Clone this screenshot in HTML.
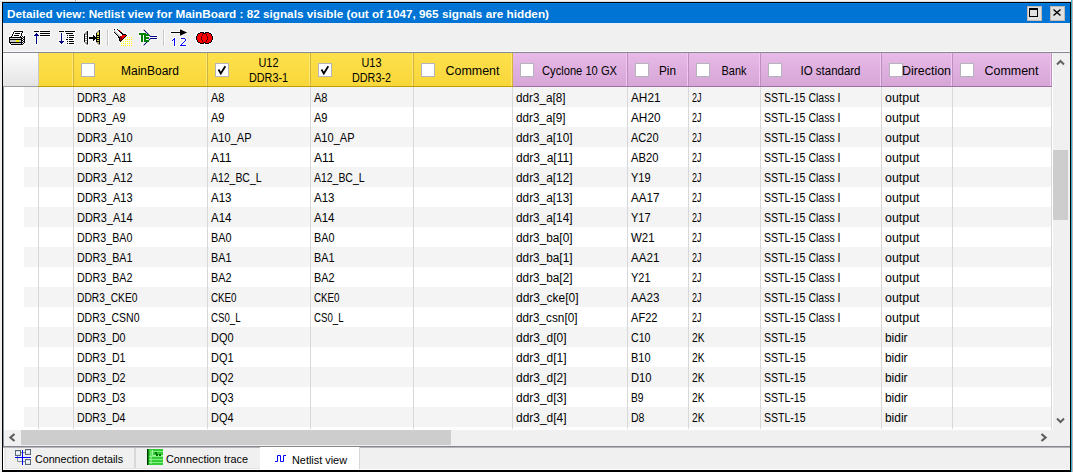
<!DOCTYPE html><html><head><meta charset="utf-8"><style>
*{margin:0;padding:0;box-sizing:border-box}
html,body{width:1073px;height:472px;overflow:hidden;background:#f0f0f0}
body{position:relative;font-family:"Liberation Sans",sans-serif}
.a{position:absolute}
svg{position:absolute;left:0;top:0;overflow:visible}
</style></head><body><div class="a" style="left:0px;top:0px;width:1073px;height:1px;background:#f6f6f6;"></div>
<div class="a" style="left:0px;top:1px;width:1073px;height:1px;background:#dedede;"></div>
<div class="a" style="left:75px;top:0px;width:1px;height:1px;background:#a8a8a8;"></div>
<div class="a" style="left:76px;top:0px;width:1px;height:1px;background:#ffffff;"></div>
<div class="a" style="left:2px;top:2px;width:1069px;height:470px;background:#000;"></div>
<div class="a" style="left:1071px;top:0px;width:1px;height:472px;background:#34b0cc;"></div>
<div class="a" style="left:1072px;top:0px;width:1px;height:472px;background:#c4b6b8;"></div>
<div class="a" style="left:3px;top:3px;width:1067px;height:467px;background:#f0f0f0;"></div>
<div class="a" style="left:3px;top:3px;width:1067px;height:20px;background:#0074d4;"></div>
<div class="a" style="left:3px;top:3px;width:1067px;height:1px;background:#0080e0;"></div>
<div class="a" style="left:1027px;top:6px;width:15px;height:15px;background:#e1e1e1;border:1px solid #c4b8b0"></div>
<div class="a" style="left:1050px;top:6px;width:15px;height:15px;background:#e1e1e1;border:1px solid #c4b8b0"></div>
<div class="a" style="left:3px;top:51px;width:1067px;height:1px;background:#fafafa;"></div>
<div class="a" style="left:3px;top:52px;width:1067px;height:1px;background:#858a92;"></div>
<div class="a" style="left:3px;top:53px;width:35px;height:33px;background:linear-gradient(#fcfcfc,#e4e4e4);"></div>
<div class="a" style="left:3px;top:86px;width:35px;height:1px;background:#a0a0a0;"></div>
<div class="a" style="left:513px;top:53px;width:539px;height:33px;background:linear-gradient(#e8bae8,#d6a6d6);"></div>
<div class="a" style="left:38px;top:53px;width:475px;height:33px;background:linear-gradient(#fde04c,#f9d73a);"></div>
<div class="a" style="left:38px;top:86px;width:475px;height:1px;background:#c0a000;"></div>
<div class="a" style="left:513px;top:86px;width:539px;height:1px;background:#a070a0;"></div>
<div class="a" style="left:38px;top:53px;width:1px;height:33px;background:#c8c8c8;"></div>
<div class="a" style="left:72px;top:53px;width:1px;height:33px;background:#fee878;"></div>
<div class="a" style="left:73px;top:53px;width:1px;height:33px;background:#d4b438;"></div>
<div class="a" style="left:206px;top:53px;width:1px;height:33px;background:#fee878;"></div>
<div class="a" style="left:207px;top:53px;width:1px;height:33px;background:#d4b438;"></div>
<div class="a" style="left:309px;top:53px;width:1px;height:33px;background:#fee878;"></div>
<div class="a" style="left:310px;top:53px;width:1px;height:33px;background:#d4b438;"></div>
<div class="a" style="left:412px;top:53px;width:1px;height:33px;background:#fee878;"></div>
<div class="a" style="left:413px;top:53px;width:1px;height:33px;background:#d4b438;"></div>
<div class="a" style="left:511px;top:53px;width:1px;height:33px;background:#fee878;"></div>
<div class="a" style="left:512px;top:53px;width:1px;height:33px;background:#d4b438;"></div>
<div class="a" style="left:626px;top:53px;width:1px;height:33px;background:#f0c8f0;"></div>
<div class="a" style="left:627px;top:53px;width:1px;height:33px;background:#bc90bc;"></div>
<div class="a" style="left:687px;top:53px;width:1px;height:33px;background:#f0c8f0;"></div>
<div class="a" style="left:688px;top:53px;width:1px;height:33px;background:#bc90bc;"></div>
<div class="a" style="left:759px;top:53px;width:1px;height:33px;background:#f0c8f0;"></div>
<div class="a" style="left:760px;top:53px;width:1px;height:33px;background:#bc90bc;"></div>
<div class="a" style="left:880px;top:53px;width:1px;height:33px;background:#f0c8f0;"></div>
<div class="a" style="left:881px;top:53px;width:1px;height:33px;background:#bc90bc;"></div>
<div class="a" style="left:951px;top:53px;width:1px;height:33px;background:#f0c8f0;"></div>
<div class="a" style="left:952px;top:53px;width:1px;height:33px;background:#bc90bc;"></div>
<div class="a" style="left:1050px;top:53px;width:1px;height:33px;background:#f0c8f0;"></div>
<div class="a" style="left:1051px;top:53px;width:1px;height:33px;background:#bc90bc;"></div>
<div class="a" style="left:3px;top:87px;width:1048px;height:20px;background:#fff;"></div>
<div class="a" style="left:24px;top:87px;width:1027px;height:20px;background:#f4f4f4;"></div>
<div class="a" style="left:3px;top:107px;width:1048px;height:20px;background:#fff;"></div>
<div class="a" style="left:3px;top:127px;width:1048px;height:20px;background:#fff;"></div>
<div class="a" style="left:24px;top:127px;width:1027px;height:20px;background:#f4f4f4;"></div>
<div class="a" style="left:3px;top:147px;width:1048px;height:20px;background:#fff;"></div>
<div class="a" style="left:3px;top:167px;width:1048px;height:20px;background:#fff;"></div>
<div class="a" style="left:24px;top:167px;width:1027px;height:20px;background:#f4f4f4;"></div>
<div class="a" style="left:3px;top:187px;width:1048px;height:20px;background:#fff;"></div>
<div class="a" style="left:3px;top:207px;width:1048px;height:20px;background:#fff;"></div>
<div class="a" style="left:24px;top:207px;width:1027px;height:20px;background:#f4f4f4;"></div>
<div class="a" style="left:3px;top:227px;width:1048px;height:20px;background:#fff;"></div>
<div class="a" style="left:3px;top:247px;width:1048px;height:20px;background:#fff;"></div>
<div class="a" style="left:24px;top:247px;width:1027px;height:20px;background:#f4f4f4;"></div>
<div class="a" style="left:3px;top:267px;width:1048px;height:20px;background:#fff;"></div>
<div class="a" style="left:3px;top:287px;width:1048px;height:20px;background:#fff;"></div>
<div class="a" style="left:24px;top:287px;width:1027px;height:20px;background:#f4f4f4;"></div>
<div class="a" style="left:3px;top:307px;width:1048px;height:20px;background:#fff;"></div>
<div class="a" style="left:3px;top:327px;width:1048px;height:20px;background:#fff;"></div>
<div class="a" style="left:24px;top:327px;width:1027px;height:20px;background:#f4f4f4;"></div>
<div class="a" style="left:3px;top:347px;width:1048px;height:20px;background:#fff;"></div>
<div class="a" style="left:3px;top:367px;width:1048px;height:20px;background:#fff;"></div>
<div class="a" style="left:24px;top:367px;width:1027px;height:20px;background:#f4f4f4;"></div>
<div class="a" style="left:3px;top:387px;width:1048px;height:20px;background:#fff;"></div>
<div class="a" style="left:3px;top:407px;width:1048px;height:20px;background:#fff;"></div>
<div class="a" style="left:24px;top:407px;width:1027px;height:20px;background:#f4f4f4;"></div>
<div class="a" style="left:3px;top:427px;width:1048px;height:3px;background:#fff;"></div>
<div class="a" style="left:38px;top:87px;width:1px;height:342px;background:#d8d8d8;"></div>
<div class="a" style="left:73px;top:87px;width:1px;height:342px;background:#d8d8d8;"></div>
<div class="a" style="left:207px;top:87px;width:1px;height:342px;background:#d8d8d8;"></div>
<div class="a" style="left:310px;top:87px;width:1px;height:342px;background:#d8d8d8;"></div>
<div class="a" style="left:413px;top:87px;width:1px;height:342px;background:#d8d8d8;"></div>
<div class="a" style="left:512px;top:87px;width:1px;height:342px;background:#d8d8d8;"></div>
<div class="a" style="left:627px;top:87px;width:1px;height:342px;background:#d8d8d8;"></div>
<div class="a" style="left:688px;top:87px;width:1px;height:342px;background:#d8d8d8;"></div>
<div class="a" style="left:760px;top:87px;width:1px;height:342px;background:#d8d8d8;"></div>
<div class="a" style="left:881px;top:87px;width:1px;height:342px;background:#d8d8d8;"></div>
<div class="a" style="left:952px;top:87px;width:1px;height:342px;background:#d8d8d8;"></div>
<div class="a" style="left:1051px;top:87px;width:1px;height:342px;background:#d8d8d8;"></div>
<div class="a" style="left:1052px;top:53px;width:1px;height:377px;background:#ffffff;"></div>
<div class="a" style="left:1053px;top:53px;width:17px;height:377px;background:#f0f0f0;"></div>
<div class="a" style="left:1053px;top:150px;width:15px;height:70px;background:#cdcdcd;"></div>
<div class="a" style="left:3px;top:430px;width:1067px;height:16px;background:#f0f0f0;"></div>
<div class="a" style="left:21px;top:430px;width:430px;height:15px;background:#cdcdcd;"></div>
<div class="a" style="left:3px;top:87px;width:1px;height:359px;background:#8c949e;"></div>
<div class="a" style="left:3px;top:446px;width:1067px;height:1px;background:#84888c;"></div>
<div class="a" style="left:3px;top:447px;width:1067px;height:23px;background:#f0f0f0;"></div>
<div class="a" style="left:3px;top:447px;width:1067px;height:1px;background:#b4b6b8;"></div>
<div class="a" style="left:260px;top:447px;width:99px;height:23px;background:#fff;"></div>
<div class="a" style="left:359px;top:447px;width:1px;height:23px;background:#d8d8d8;"></div>
<div class="a" style="left:134px;top:448px;width:2px;height:20px;background:#d8d8d8;"></div>
<div class="a" style="left:3px;top:448px;width:1px;height:22px;background:#ffffff;"></div>
<div class="a" style="left:3px;top:469px;width:1067px;height:1px;background:#ffffff;"></div>
<div class="a" style="left:5px;top:448px;width:1px;height:21px;background:#e2e2e2;"></div>
<div class="a" style="left:5px;top:468px;width:255px;height:1px;background:#e2e2e2;"></div><svg width="1073" height="472" viewBox="0 0 1073 472"><defs><filter id="halo" x="-5%" y="-5%" width="110%" height="110%" filterUnits="userSpaceOnUse"><feMorphology in="SourceAlpha" operator="dilate" radius="1" result="d"/><feFlood flood-color="#ffffff" flood-opacity="0.75"/><feComposite in2="d" operator="in" result="w"/><feMerge><feMergeNode in="w"/><feMergeNode in="SourceGraphic"/></feMerge></filter><linearGradient id="bx" x1="0" y1="0" x2="0" y2="1"><stop offset="0" stop-color="#a0b0c0"/><stop offset="0.4" stop-color="#ffffff"/><stop offset="1" stop-color="#c8d4e4"/></linearGradient><linearGradient id="fl" x1="0" y1="0" x2="1" y2="1"><stop offset="0" stop-color="#ffffff"/><stop offset="1" stop-color="#b0b0b0"/></linearGradient></defs><text x="7" y="18" font-family="Liberation Sans" font-size="11" font-weight="bold" fill="#fff" textLength="542" lengthAdjust="spacingAndGlyphs" text-anchor="start">Detailed view: Netlist view for MainBoard : 82 signals visible (out of 1047, 965 signals are hidden)</text><rect x="1029" y="8" width="9" height="2" fill="#000"/><rect x="1029" y="10" width="1" height="7" fill="#000"/><rect x="1037" y="10" width="1" height="7" fill="#000"/><rect x="1029" y="16" width="9" height="1" fill="#000"/><path d="M1053.5 9.5L1060.5 15.5M1060.5 9.5L1053.5 15.5" stroke="#000" stroke-width="1.45" fill="none"/><rect x="81.5" y="63.5" width="13" height="13" fill="#fff" stroke="#b4b4bc"/><text x="150.0" y="75" font-family="Liberation Sans" font-size="12" font-weight="normal" fill="#000" textLength="58" lengthAdjust="spacingAndGlyphs" text-anchor="middle">MainBoard</text><rect x="215.5" y="63.5" width="13" height="13" fill="#fff" stroke="#b4b4bc"/><path d="M218.5 69.5L220.8 73.5L225.3 66.3" stroke="#000" stroke-width="1.8" fill="none"/><text x="268.5" y="67" font-family="Liberation Sans" font-size="12" font-weight="normal" fill="#000" textLength="20" lengthAdjust="spacingAndGlyphs" text-anchor="middle">U12</text><text x="268.5" y="82" font-family="Liberation Sans" font-size="12" font-weight="normal" fill="#000" textLength="39" lengthAdjust="spacingAndGlyphs" text-anchor="middle">DDR3-1</text><rect x="318.5" y="63.5" width="13" height="13" fill="#fff" stroke="#b4b4bc"/><path d="M321.5 69.5L323.8 73.5L328.3 66.3" stroke="#000" stroke-width="1.8" fill="none"/><text x="371.5" y="67" font-family="Liberation Sans" font-size="12" font-weight="normal" fill="#000" textLength="20" lengthAdjust="spacingAndGlyphs" text-anchor="middle">U13</text><text x="371.5" y="82" font-family="Liberation Sans" font-size="12" font-weight="normal" fill="#000" textLength="39" lengthAdjust="spacingAndGlyphs" text-anchor="middle">DDR3-2</text><rect x="421.5" y="63.5" width="13" height="13" fill="#fff" stroke="#b4b4bc"/><text x="472.5" y="75" font-family="Liberation Sans" font-size="12" font-weight="normal" fill="#000" textLength="54" lengthAdjust="spacingAndGlyphs" text-anchor="middle">Comment</text><rect x="520.5" y="63.5" width="13" height="13" fill="#fff" stroke="#b4b4bc"/><text x="579.5" y="75" font-family="Liberation Sans" font-size="12" font-weight="normal" fill="#000" textLength="75" lengthAdjust="spacingAndGlyphs" text-anchor="middle">Cyclone 10 GX</text><rect x="635.5" y="63.5" width="13" height="13" fill="#fff" stroke="#b4b4bc"/><text x="667.5" y="75" font-family="Liberation Sans" font-size="12" font-weight="normal" fill="#000" textLength="17" lengthAdjust="spacingAndGlyphs" text-anchor="middle">Pin</text><rect x="696.5" y="63.5" width="13" height="13" fill="#fff" stroke="#b4b4bc"/><text x="734.0" y="75" font-family="Liberation Sans" font-size="12" font-weight="normal" fill="#000" textLength="25" lengthAdjust="spacingAndGlyphs" text-anchor="middle">Bank</text><rect x="768.5" y="63.5" width="13" height="13" fill="#fff" stroke="#b4b4bc"/><text x="830.5" y="75" font-family="Liberation Sans" font-size="12" font-weight="normal" fill="#000" textLength="60" lengthAdjust="spacingAndGlyphs" text-anchor="middle">IO standard</text><rect x="889.5" y="63.5" width="13" height="13" fill="#fff" stroke="#b4b4bc"/><text x="926.5" y="75" font-family="Liberation Sans" font-size="12" font-weight="normal" fill="#000" textLength="49" lengthAdjust="spacingAndGlyphs" text-anchor="middle">Direction</text><rect x="960.5" y="63.5" width="13" height="13" fill="#fff" stroke="#b4b4bc"/><text x="1011.5" y="75" font-family="Liberation Sans" font-size="12" font-weight="normal" fill="#000" textLength="54" lengthAdjust="spacingAndGlyphs" text-anchor="middle">Comment</text><text x="77" y="102" font-family="Liberation Sans" font-size="12" font-weight="normal" fill="#000" textLength="48.5" lengthAdjust="spacingAndGlyphs" text-anchor="start">DDR3_A8</text><text x="211" y="102" font-family="Liberation Sans" font-size="12" font-weight="normal" fill="#000" textLength="13.5" lengthAdjust="spacingAndGlyphs" text-anchor="start">A8</text><text x="314" y="102" font-family="Liberation Sans" font-size="12" font-weight="normal" fill="#000" textLength="13.5" lengthAdjust="spacingAndGlyphs" text-anchor="start">A8</text><text x="516" y="102" font-family="Liberation Sans" font-size="12" font-weight="normal" fill="#000" textLength="49.5" lengthAdjust="spacingAndGlyphs" text-anchor="start">ddr3_a[8]</text><text x="631" y="102" font-family="Liberation Sans" font-size="12" font-weight="normal" fill="#000" textLength="29.5" lengthAdjust="spacingAndGlyphs" text-anchor="start">AH21</text><text x="692" y="102" font-family="Liberation Sans" font-size="12" font-weight="normal" fill="#000" textLength="9.5" lengthAdjust="spacingAndGlyphs" text-anchor="start">2J</text><text x="764" y="102" font-family="Liberation Sans" font-size="12" font-weight="normal" fill="#000" textLength="76.5" lengthAdjust="spacingAndGlyphs" text-anchor="start">SSTL-15 Class I</text><text x="885" y="102" font-family="Liberation Sans" font-size="12" font-weight="normal" fill="#000" textLength="34.5" lengthAdjust="spacingAndGlyphs" text-anchor="start">output</text><text x="77" y="122" font-family="Liberation Sans" font-size="12" font-weight="normal" fill="#000" textLength="48.5" lengthAdjust="spacingAndGlyphs" text-anchor="start">DDR3_A9</text><text x="211" y="122" font-family="Liberation Sans" font-size="12" font-weight="normal" fill="#000" textLength="13.5" lengthAdjust="spacingAndGlyphs" text-anchor="start">A9</text><text x="314" y="122" font-family="Liberation Sans" font-size="12" font-weight="normal" fill="#000" textLength="13.5" lengthAdjust="spacingAndGlyphs" text-anchor="start">A9</text><text x="516" y="122" font-family="Liberation Sans" font-size="12" font-weight="normal" fill="#000" textLength="49.5" lengthAdjust="spacingAndGlyphs" text-anchor="start">ddr3_a[9]</text><text x="631" y="122" font-family="Liberation Sans" font-size="12" font-weight="normal" fill="#000" textLength="29.5" lengthAdjust="spacingAndGlyphs" text-anchor="start">AH20</text><text x="692" y="122" font-family="Liberation Sans" font-size="12" font-weight="normal" fill="#000" textLength="9.5" lengthAdjust="spacingAndGlyphs" text-anchor="start">2J</text><text x="764" y="122" font-family="Liberation Sans" font-size="12" font-weight="normal" fill="#000" textLength="76.5" lengthAdjust="spacingAndGlyphs" text-anchor="start">SSTL-15 Class I</text><text x="885" y="122" font-family="Liberation Sans" font-size="12" font-weight="normal" fill="#000" textLength="34.5" lengthAdjust="spacingAndGlyphs" text-anchor="start">output</text><text x="77" y="142" font-family="Liberation Sans" font-size="12" font-weight="normal" fill="#000" textLength="55.5" lengthAdjust="spacingAndGlyphs" text-anchor="start">DDR3_A10</text><text x="211" y="142" font-family="Liberation Sans" font-size="12" font-weight="normal" fill="#000" textLength="40.5" lengthAdjust="spacingAndGlyphs" text-anchor="start">A10_AP</text><text x="314" y="142" font-family="Liberation Sans" font-size="12" font-weight="normal" fill="#000" textLength="40.5" lengthAdjust="spacingAndGlyphs" text-anchor="start">A10_AP</text><text x="516" y="142" font-family="Liberation Sans" font-size="12" font-weight="normal" fill="#000" textLength="56.5" lengthAdjust="spacingAndGlyphs" text-anchor="start">ddr3_a[10]</text><text x="631" y="142" font-family="Liberation Sans" font-size="12" font-weight="normal" fill="#000" textLength="27.5" lengthAdjust="spacingAndGlyphs" text-anchor="start">AC20</text><text x="692" y="142" font-family="Liberation Sans" font-size="12" font-weight="normal" fill="#000" textLength="9.5" lengthAdjust="spacingAndGlyphs" text-anchor="start">2J</text><text x="764" y="142" font-family="Liberation Sans" font-size="12" font-weight="normal" fill="#000" textLength="76.5" lengthAdjust="spacingAndGlyphs" text-anchor="start">SSTL-15 Class I</text><text x="885" y="142" font-family="Liberation Sans" font-size="12" font-weight="normal" fill="#000" textLength="34.5" lengthAdjust="spacingAndGlyphs" text-anchor="start">output</text><text x="77" y="162" font-family="Liberation Sans" font-size="12" font-weight="normal" fill="#000" textLength="55.5" lengthAdjust="spacingAndGlyphs" text-anchor="start">DDR3_A11</text><text x="211" y="162" font-family="Liberation Sans" font-size="12" font-weight="normal" fill="#000" textLength="20.5" lengthAdjust="spacingAndGlyphs" text-anchor="start">A11</text><text x="314" y="162" font-family="Liberation Sans" font-size="12" font-weight="normal" fill="#000" textLength="20.5" lengthAdjust="spacingAndGlyphs" text-anchor="start">A11</text><text x="516" y="162" font-family="Liberation Sans" font-size="12" font-weight="normal" fill="#000" textLength="56.5" lengthAdjust="spacingAndGlyphs" text-anchor="start">ddr3_a[11]</text><text x="631" y="162" font-family="Liberation Sans" font-size="12" font-weight="normal" fill="#000" textLength="27.5" lengthAdjust="spacingAndGlyphs" text-anchor="start">AB20</text><text x="692" y="162" font-family="Liberation Sans" font-size="12" font-weight="normal" fill="#000" textLength="9.5" lengthAdjust="spacingAndGlyphs" text-anchor="start">2J</text><text x="764" y="162" font-family="Liberation Sans" font-size="12" font-weight="normal" fill="#000" textLength="76.5" lengthAdjust="spacingAndGlyphs" text-anchor="start">SSTL-15 Class I</text><text x="885" y="162" font-family="Liberation Sans" font-size="12" font-weight="normal" fill="#000" textLength="34.5" lengthAdjust="spacingAndGlyphs" text-anchor="start">output</text><text x="77" y="182" font-family="Liberation Sans" font-size="12" font-weight="normal" fill="#000" textLength="55.5" lengthAdjust="spacingAndGlyphs" text-anchor="start">DDR3_A12</text><text x="211" y="182" font-family="Liberation Sans" font-size="12" font-weight="normal" fill="#000" textLength="50.5" lengthAdjust="spacingAndGlyphs" text-anchor="start">A12_BC_L</text><text x="314" y="182" font-family="Liberation Sans" font-size="12" font-weight="normal" fill="#000" textLength="50.5" lengthAdjust="spacingAndGlyphs" text-anchor="start">A12_BC_L</text><text x="516" y="182" font-family="Liberation Sans" font-size="12" font-weight="normal" fill="#000" textLength="56.5" lengthAdjust="spacingAndGlyphs" text-anchor="start">ddr3_a[12]</text><text x="631" y="182" font-family="Liberation Sans" font-size="12" font-weight="normal" fill="#000" textLength="19.5" lengthAdjust="spacingAndGlyphs" text-anchor="start">Y19</text><text x="692" y="182" font-family="Liberation Sans" font-size="12" font-weight="normal" fill="#000" textLength="9.5" lengthAdjust="spacingAndGlyphs" text-anchor="start">2J</text><text x="764" y="182" font-family="Liberation Sans" font-size="12" font-weight="normal" fill="#000" textLength="76.5" lengthAdjust="spacingAndGlyphs" text-anchor="start">SSTL-15 Class I</text><text x="885" y="182" font-family="Liberation Sans" font-size="12" font-weight="normal" fill="#000" textLength="34.5" lengthAdjust="spacingAndGlyphs" text-anchor="start">output</text><text x="77" y="202" font-family="Liberation Sans" font-size="12" font-weight="normal" fill="#000" textLength="55.5" lengthAdjust="spacingAndGlyphs" text-anchor="start">DDR3_A13</text><text x="211" y="202" font-family="Liberation Sans" font-size="12" font-weight="normal" fill="#000" textLength="20.5" lengthAdjust="spacingAndGlyphs" text-anchor="start">A13</text><text x="314" y="202" font-family="Liberation Sans" font-size="12" font-weight="normal" fill="#000" textLength="20.5" lengthAdjust="spacingAndGlyphs" text-anchor="start">A13</text><text x="516" y="202" font-family="Liberation Sans" font-size="12" font-weight="normal" fill="#000" textLength="56.5" lengthAdjust="spacingAndGlyphs" text-anchor="start">ddr3_a[13]</text><text x="631" y="202" font-family="Liberation Sans" font-size="12" font-weight="normal" fill="#000" textLength="28.5" lengthAdjust="spacingAndGlyphs" text-anchor="start">AA17</text><text x="692" y="202" font-family="Liberation Sans" font-size="12" font-weight="normal" fill="#000" textLength="9.5" lengthAdjust="spacingAndGlyphs" text-anchor="start">2J</text><text x="764" y="202" font-family="Liberation Sans" font-size="12" font-weight="normal" fill="#000" textLength="76.5" lengthAdjust="spacingAndGlyphs" text-anchor="start">SSTL-15 Class I</text><text x="885" y="202" font-family="Liberation Sans" font-size="12" font-weight="normal" fill="#000" textLength="34.5" lengthAdjust="spacingAndGlyphs" text-anchor="start">output</text><text x="77" y="222" font-family="Liberation Sans" font-size="12" font-weight="normal" fill="#000" textLength="55.5" lengthAdjust="spacingAndGlyphs" text-anchor="start">DDR3_A14</text><text x="211" y="222" font-family="Liberation Sans" font-size="12" font-weight="normal" fill="#000" textLength="20.5" lengthAdjust="spacingAndGlyphs" text-anchor="start">A14</text><text x="314" y="222" font-family="Liberation Sans" font-size="12" font-weight="normal" fill="#000" textLength="20.5" lengthAdjust="spacingAndGlyphs" text-anchor="start">A14</text><text x="516" y="222" font-family="Liberation Sans" font-size="12" font-weight="normal" fill="#000" textLength="56.5" lengthAdjust="spacingAndGlyphs" text-anchor="start">ddr3_a[14]</text><text x="631" y="222" font-family="Liberation Sans" font-size="12" font-weight="normal" fill="#000" textLength="19.5" lengthAdjust="spacingAndGlyphs" text-anchor="start">Y17</text><text x="692" y="222" font-family="Liberation Sans" font-size="12" font-weight="normal" fill="#000" textLength="9.5" lengthAdjust="spacingAndGlyphs" text-anchor="start">2J</text><text x="764" y="222" font-family="Liberation Sans" font-size="12" font-weight="normal" fill="#000" textLength="76.5" lengthAdjust="spacingAndGlyphs" text-anchor="start">SSTL-15 Class I</text><text x="885" y="222" font-family="Liberation Sans" font-size="12" font-weight="normal" fill="#000" textLength="34.5" lengthAdjust="spacingAndGlyphs" text-anchor="start">output</text><text x="77" y="242" font-family="Liberation Sans" font-size="12" font-weight="normal" fill="#000" textLength="55.5" lengthAdjust="spacingAndGlyphs" text-anchor="start">DDR3_BA0</text><text x="211" y="242" font-family="Liberation Sans" font-size="12" font-weight="normal" fill="#000" textLength="20.5" lengthAdjust="spacingAndGlyphs" text-anchor="start">BA0</text><text x="314" y="242" font-family="Liberation Sans" font-size="12" font-weight="normal" fill="#000" textLength="20.5" lengthAdjust="spacingAndGlyphs" text-anchor="start">BA0</text><text x="516" y="242" font-family="Liberation Sans" font-size="12" font-weight="normal" fill="#000" textLength="56.5" lengthAdjust="spacingAndGlyphs" text-anchor="start">ddr3_ba[0]</text><text x="631" y="242" font-family="Liberation Sans" font-size="12" font-weight="normal" fill="#000" textLength="23.5" lengthAdjust="spacingAndGlyphs" text-anchor="start">W21</text><text x="692" y="242" font-family="Liberation Sans" font-size="12" font-weight="normal" fill="#000" textLength="9.5" lengthAdjust="spacingAndGlyphs" text-anchor="start">2J</text><text x="764" y="242" font-family="Liberation Sans" font-size="12" font-weight="normal" fill="#000" textLength="76.5" lengthAdjust="spacingAndGlyphs" text-anchor="start">SSTL-15 Class I</text><text x="885" y="242" font-family="Liberation Sans" font-size="12" font-weight="normal" fill="#000" textLength="34.5" lengthAdjust="spacingAndGlyphs" text-anchor="start">output</text><text x="77" y="262" font-family="Liberation Sans" font-size="12" font-weight="normal" fill="#000" textLength="55.5" lengthAdjust="spacingAndGlyphs" text-anchor="start">DDR3_BA1</text><text x="211" y="262" font-family="Liberation Sans" font-size="12" font-weight="normal" fill="#000" textLength="20.5" lengthAdjust="spacingAndGlyphs" text-anchor="start">BA1</text><text x="314" y="262" font-family="Liberation Sans" font-size="12" font-weight="normal" fill="#000" textLength="20.5" lengthAdjust="spacingAndGlyphs" text-anchor="start">BA1</text><text x="516" y="262" font-family="Liberation Sans" font-size="12" font-weight="normal" fill="#000" textLength="56.5" lengthAdjust="spacingAndGlyphs" text-anchor="start">ddr3_ba[1]</text><text x="631" y="262" font-family="Liberation Sans" font-size="12" font-weight="normal" fill="#000" textLength="28.5" lengthAdjust="spacingAndGlyphs" text-anchor="start">AA21</text><text x="692" y="262" font-family="Liberation Sans" font-size="12" font-weight="normal" fill="#000" textLength="9.5" lengthAdjust="spacingAndGlyphs" text-anchor="start">2J</text><text x="764" y="262" font-family="Liberation Sans" font-size="12" font-weight="normal" fill="#000" textLength="76.5" lengthAdjust="spacingAndGlyphs" text-anchor="start">SSTL-15 Class I</text><text x="885" y="262" font-family="Liberation Sans" font-size="12" font-weight="normal" fill="#000" textLength="34.5" lengthAdjust="spacingAndGlyphs" text-anchor="start">output</text><text x="77" y="282" font-family="Liberation Sans" font-size="12" font-weight="normal" fill="#000" textLength="55.5" lengthAdjust="spacingAndGlyphs" text-anchor="start">DDR3_BA2</text><text x="211" y="282" font-family="Liberation Sans" font-size="12" font-weight="normal" fill="#000" textLength="20.5" lengthAdjust="spacingAndGlyphs" text-anchor="start">BA2</text><text x="314" y="282" font-family="Liberation Sans" font-size="12" font-weight="normal" fill="#000" textLength="20.5" lengthAdjust="spacingAndGlyphs" text-anchor="start">BA2</text><text x="516" y="282" font-family="Liberation Sans" font-size="12" font-weight="normal" fill="#000" textLength="56.5" lengthAdjust="spacingAndGlyphs" text-anchor="start">ddr3_ba[2]</text><text x="631" y="282" font-family="Liberation Sans" font-size="12" font-weight="normal" fill="#000" textLength="19.5" lengthAdjust="spacingAndGlyphs" text-anchor="start">Y21</text><text x="692" y="282" font-family="Liberation Sans" font-size="12" font-weight="normal" fill="#000" textLength="9.5" lengthAdjust="spacingAndGlyphs" text-anchor="start">2J</text><text x="764" y="282" font-family="Liberation Sans" font-size="12" font-weight="normal" fill="#000" textLength="76.5" lengthAdjust="spacingAndGlyphs" text-anchor="start">SSTL-15 Class I</text><text x="885" y="282" font-family="Liberation Sans" font-size="12" font-weight="normal" fill="#000" textLength="34.5" lengthAdjust="spacingAndGlyphs" text-anchor="start">output</text><text x="77" y="302" font-family="Liberation Sans" font-size="12" font-weight="normal" fill="#000" textLength="60.5" lengthAdjust="spacingAndGlyphs" text-anchor="start">DDR3_CKE0</text><text x="211" y="302" font-family="Liberation Sans" font-size="12" font-weight="normal" fill="#000" textLength="25.5" lengthAdjust="spacingAndGlyphs" text-anchor="start">CKE0</text><text x="314" y="302" font-family="Liberation Sans" font-size="12" font-weight="normal" fill="#000" textLength="25.5" lengthAdjust="spacingAndGlyphs" text-anchor="start">CKE0</text><text x="516" y="302" font-family="Liberation Sans" font-size="12" font-weight="normal" fill="#000" textLength="62.5" lengthAdjust="spacingAndGlyphs" text-anchor="start">ddr3_cke[0]</text><text x="631" y="302" font-family="Liberation Sans" font-size="12" font-weight="normal" fill="#000" textLength="28.5" lengthAdjust="spacingAndGlyphs" text-anchor="start">AA23</text><text x="692" y="302" font-family="Liberation Sans" font-size="12" font-weight="normal" fill="#000" textLength="9.5" lengthAdjust="spacingAndGlyphs" text-anchor="start">2J</text><text x="764" y="302" font-family="Liberation Sans" font-size="12" font-weight="normal" fill="#000" textLength="76.5" lengthAdjust="spacingAndGlyphs" text-anchor="start">SSTL-15 Class I</text><text x="885" y="302" font-family="Liberation Sans" font-size="12" font-weight="normal" fill="#000" textLength="34.5" lengthAdjust="spacingAndGlyphs" text-anchor="start">output</text><text x="77" y="322" font-family="Liberation Sans" font-size="12" font-weight="normal" fill="#000" textLength="62.5" lengthAdjust="spacingAndGlyphs" text-anchor="start">DDR3_CSN0</text><text x="211" y="322" font-family="Liberation Sans" font-size="12" font-weight="normal" fill="#000" textLength="29.5" lengthAdjust="spacingAndGlyphs" text-anchor="start">CS0_L</text><text x="314" y="322" font-family="Liberation Sans" font-size="12" font-weight="normal" fill="#000" textLength="29.5" lengthAdjust="spacingAndGlyphs" text-anchor="start">CS0_L</text><text x="516" y="322" font-family="Liberation Sans" font-size="12" font-weight="normal" fill="#000" textLength="61.5" lengthAdjust="spacingAndGlyphs" text-anchor="start">ddr3_csn[0]</text><text x="631" y="322" font-family="Liberation Sans" font-size="12" font-weight="normal" fill="#000" textLength="26.5" lengthAdjust="spacingAndGlyphs" text-anchor="start">AF22</text><text x="692" y="322" font-family="Liberation Sans" font-size="12" font-weight="normal" fill="#000" textLength="9.5" lengthAdjust="spacingAndGlyphs" text-anchor="start">2J</text><text x="764" y="322" font-family="Liberation Sans" font-size="12" font-weight="normal" fill="#000" textLength="76.5" lengthAdjust="spacingAndGlyphs" text-anchor="start">SSTL-15 Class I</text><text x="885" y="322" font-family="Liberation Sans" font-size="12" font-weight="normal" fill="#000" textLength="34.5" lengthAdjust="spacingAndGlyphs" text-anchor="start">output</text><text x="77" y="342" font-family="Liberation Sans" font-size="12" font-weight="normal" fill="#000" textLength="48.5" lengthAdjust="spacingAndGlyphs" text-anchor="start">DDR3_D0</text><text x="211" y="342" font-family="Liberation Sans" font-size="12" font-weight="normal" fill="#000" textLength="22.5" lengthAdjust="spacingAndGlyphs" text-anchor="start">DQ0</text><text x="516" y="342" font-family="Liberation Sans" font-size="12" font-weight="normal" fill="#000" textLength="50.5" lengthAdjust="spacingAndGlyphs" text-anchor="start">ddr3_d[0]</text><text x="631" y="342" font-family="Liberation Sans" font-size="12" font-weight="normal" fill="#000" textLength="19.5" lengthAdjust="spacingAndGlyphs" text-anchor="start">C10</text><text x="692" y="342" font-family="Liberation Sans" font-size="12" font-weight="normal" fill="#000" textLength="12.5" lengthAdjust="spacingAndGlyphs" text-anchor="start">2K</text><text x="764" y="342" font-family="Liberation Sans" font-size="12" font-weight="normal" fill="#000" textLength="41.5" lengthAdjust="spacingAndGlyphs" text-anchor="start">SSTL-15</text><text x="885" y="342" font-family="Liberation Sans" font-size="12" font-weight="normal" fill="#000" textLength="22.5" lengthAdjust="spacingAndGlyphs" text-anchor="start">bidir</text><text x="77" y="362" font-family="Liberation Sans" font-size="12" font-weight="normal" fill="#000" textLength="48.5" lengthAdjust="spacingAndGlyphs" text-anchor="start">DDR3_D1</text><text x="211" y="362" font-family="Liberation Sans" font-size="12" font-weight="normal" fill="#000" textLength="22.5" lengthAdjust="spacingAndGlyphs" text-anchor="start">DQ1</text><text x="516" y="362" font-family="Liberation Sans" font-size="12" font-weight="normal" fill="#000" textLength="50.5" lengthAdjust="spacingAndGlyphs" text-anchor="start">ddr3_d[1]</text><text x="631" y="362" font-family="Liberation Sans" font-size="12" font-weight="normal" fill="#000" textLength="19.5" lengthAdjust="spacingAndGlyphs" text-anchor="start">B10</text><text x="692" y="362" font-family="Liberation Sans" font-size="12" font-weight="normal" fill="#000" textLength="12.5" lengthAdjust="spacingAndGlyphs" text-anchor="start">2K</text><text x="764" y="362" font-family="Liberation Sans" font-size="12" font-weight="normal" fill="#000" textLength="41.5" lengthAdjust="spacingAndGlyphs" text-anchor="start">SSTL-15</text><text x="885" y="362" font-family="Liberation Sans" font-size="12" font-weight="normal" fill="#000" textLength="22.5" lengthAdjust="spacingAndGlyphs" text-anchor="start">bidir</text><text x="77" y="382" font-family="Liberation Sans" font-size="12" font-weight="normal" fill="#000" textLength="48.5" lengthAdjust="spacingAndGlyphs" text-anchor="start">DDR3_D2</text><text x="211" y="382" font-family="Liberation Sans" font-size="12" font-weight="normal" fill="#000" textLength="22.5" lengthAdjust="spacingAndGlyphs" text-anchor="start">DQ2</text><text x="516" y="382" font-family="Liberation Sans" font-size="12" font-weight="normal" fill="#000" textLength="50.5" lengthAdjust="spacingAndGlyphs" text-anchor="start">ddr3_d[2]</text><text x="631" y="382" font-family="Liberation Sans" font-size="12" font-weight="normal" fill="#000" textLength="20.5" lengthAdjust="spacingAndGlyphs" text-anchor="start">D10</text><text x="692" y="382" font-family="Liberation Sans" font-size="12" font-weight="normal" fill="#000" textLength="12.5" lengthAdjust="spacingAndGlyphs" text-anchor="start">2K</text><text x="764" y="382" font-family="Liberation Sans" font-size="12" font-weight="normal" fill="#000" textLength="41.5" lengthAdjust="spacingAndGlyphs" text-anchor="start">SSTL-15</text><text x="885" y="382" font-family="Liberation Sans" font-size="12" font-weight="normal" fill="#000" textLength="22.5" lengthAdjust="spacingAndGlyphs" text-anchor="start">bidir</text><text x="77" y="402" font-family="Liberation Sans" font-size="12" font-weight="normal" fill="#000" textLength="48.5" lengthAdjust="spacingAndGlyphs" text-anchor="start">DDR3_D3</text><text x="211" y="402" font-family="Liberation Sans" font-size="12" font-weight="normal" fill="#000" textLength="22.5" lengthAdjust="spacingAndGlyphs" text-anchor="start">DQ3</text><text x="516" y="402" font-family="Liberation Sans" font-size="12" font-weight="normal" fill="#000" textLength="50.5" lengthAdjust="spacingAndGlyphs" text-anchor="start">ddr3_d[3]</text><text x="631" y="402" font-family="Liberation Sans" font-size="12" font-weight="normal" fill="#000" textLength="12.5" lengthAdjust="spacingAndGlyphs" text-anchor="start">B9</text><text x="692" y="402" font-family="Liberation Sans" font-size="12" font-weight="normal" fill="#000" textLength="12.5" lengthAdjust="spacingAndGlyphs" text-anchor="start">2K</text><text x="764" y="402" font-family="Liberation Sans" font-size="12" font-weight="normal" fill="#000" textLength="41.5" lengthAdjust="spacingAndGlyphs" text-anchor="start">SSTL-15</text><text x="885" y="402" font-family="Liberation Sans" font-size="12" font-weight="normal" fill="#000" textLength="22.5" lengthAdjust="spacingAndGlyphs" text-anchor="start">bidir</text><text x="77" y="422" font-family="Liberation Sans" font-size="12" font-weight="normal" fill="#000" textLength="48.5" lengthAdjust="spacingAndGlyphs" text-anchor="start">DDR3_D4</text><text x="211" y="422" font-family="Liberation Sans" font-size="12" font-weight="normal" fill="#000" textLength="22.5" lengthAdjust="spacingAndGlyphs" text-anchor="start">DQ4</text><text x="516" y="422" font-family="Liberation Sans" font-size="12" font-weight="normal" fill="#000" textLength="50.5" lengthAdjust="spacingAndGlyphs" text-anchor="start">ddr3_d[4]</text><text x="631" y="422" font-family="Liberation Sans" font-size="12" font-weight="normal" fill="#000" textLength="13.5" lengthAdjust="spacingAndGlyphs" text-anchor="start">D8</text><text x="692" y="422" font-family="Liberation Sans" font-size="12" font-weight="normal" fill="#000" textLength="12.5" lengthAdjust="spacingAndGlyphs" text-anchor="start">2K</text><text x="764" y="422" font-family="Liberation Sans" font-size="12" font-weight="normal" fill="#000" textLength="41.5" lengthAdjust="spacingAndGlyphs" text-anchor="start">SSTL-15</text><text x="885" y="422" font-family="Liberation Sans" font-size="12" font-weight="normal" fill="#000" textLength="22.5" lengthAdjust="spacingAndGlyphs" text-anchor="start">bidir</text><path d="M1057 64.5L1060.5 61L1064 64.5" stroke="#606060" stroke-width="2" fill="none"/><path d="M1057 418.5L1060.5 422L1064 418.5" stroke="#606060" stroke-width="2" fill="none"/><path d="M14.5 434L10.5 437.5L14.5 441" stroke="#606060" stroke-width="2.3" fill="none"/><path d="M1041.5 434L1045.5 437.5L1041.5 441" stroke="#606060" stroke-width="2.3" fill="none"/><text x="35" y="463" font-family="Liberation Sans" font-size="11" font-weight="normal" fill="#000" textLength="88" lengthAdjust="spacingAndGlyphs" text-anchor="start">Connection details</text><text x="166" y="463" font-family="Liberation Sans" font-size="11" font-weight="normal" fill="#000" textLength="82" lengthAdjust="spacingAndGlyphs" text-anchor="start">Connection trace</text><text x="292" y="464" font-family="Liberation Sans" font-size="11" font-weight="normal" fill="#000" textLength="55" lengthAdjust="spacingAndGlyphs" text-anchor="start">Netlist view</text><rect x="107" y="30" width="1" height="16" fill="#c8c8c8"/><rect x="108" y="30" width="1" height="16" fill="#ffffff"/><rect x="163" y="30" width="1" height="16" fill="#c8c8c8"/><rect x="164" y="30" width="1" height="16" fill="#ffffff"/><g filter="url(#halo)"><rect x="14" y="31" width="9" height="1" fill="#000"/><rect x="14" y="32" width="8" height="1" fill="#fff"/><rect x="13" y="32" width="1" height="1" fill="#000"/><rect x="22" y="32" width="1" height="1" fill="#000"/><rect x="14" y="33" width="7" height="1" fill="#fff"/><rect x="13" y="33" width="1" height="1" fill="#000"/><rect x="21" y="33" width="1" height="1" fill="#000"/><rect x="13" y="34" width="8" height="1" fill="#fff"/><rect x="12" y="34" width="1" height="1" fill="#000"/><rect x="21" y="34" width="1" height="1" fill="#000"/><rect x="13" y="35" width="8" height="1" fill="#fff"/><rect x="12" y="35" width="1" height="1" fill="#000"/><rect x="21" y="35" width="1" height="1" fill="#000"/><rect x="12" y="36" width="8" height="1" fill="#fff"/><rect x="11" y="36" width="1" height="1" fill="#000"/><rect x="20" y="36" width="1" height="1" fill="#000"/><rect x="15" y="33" width="5" height="1" fill="#000"/><rect x="14" y="35" width="5" height="1" fill="#000"/><rect x="9" y="37" width="13" height="1" fill="#000"/><rect x="9" y="38" width="1" height="1" fill="#000"/><rect x="10" y="38" width="11" height="1" fill="#d0d0d0"/><rect x="21" y="38" width="1" height="1" fill="#000"/><rect x="9" y="39" width="14" height="1" fill="#000"/><rect x="9" y="40" width="1" height="1" fill="#000"/><rect x="10" y="40" width="11" height="1" fill="#c8c8c8"/><rect x="16" y="40" width="3" height="1" fill="#f0f000"/><rect x="21" y="40" width="1" height="1" fill="#000"/><rect x="9" y="41" width="1" height="1" fill="#000"/><rect x="10" y="41" width="11" height="1" fill="#c8c8c8"/><rect x="16" y="41" width="3" height="1" fill="#f0f000"/><rect x="21" y="41" width="1" height="1" fill="#000"/><rect x="9" y="42" width="14" height="1" fill="#000"/><rect x="10" y="43" width="1" height="1" fill="#000"/><rect x="11" y="43" width="10" height="1" fill="#d0d0d0"/><rect x="21" y="43" width="1" height="1" fill="#000"/><rect x="11" y="44" width="11" height="1" fill="#000"/><rect x="22" y="36" width="1" height="1" fill="#000"/><rect x="23" y="36" width="1" height="1" fill="#ffffff"/><rect x="24" y="36" width="1" height="1" fill="#000"/><rect x="22" y="37" width="1" height="1" fill="#ffffff"/><rect x="23" y="37" width="1" height="1" fill="#000"/><rect x="24" y="37" width="1" height="1" fill="#ffffff"/><rect x="22" y="38" width="1" height="1" fill="#000"/><rect x="23" y="38" width="1" height="1" fill="#ffffff"/><rect x="24" y="38" width="1" height="1" fill="#000"/><rect x="22" y="39" width="1" height="1" fill="#ffffff"/><rect x="23" y="39" width="1" height="1" fill="#000"/><rect x="24" y="39" width="1" height="1" fill="#ffffff"/><rect x="22" y="40" width="1" height="1" fill="#000"/><rect x="23" y="40" width="1" height="1" fill="#ffffff"/><rect x="24" y="40" width="1" height="1" fill="#000"/><rect x="22" y="41" width="1" height="1" fill="#ffffff"/><rect x="23" y="41" width="1" height="1" fill="#000"/><rect x="24" y="41" width="1" height="1" fill="#ffffff"/><rect x="22" y="42" width="1" height="1" fill="#000"/><rect x="23" y="42" width="1" height="1" fill="#ffffff"/><rect x="24" y="42" width="1" height="1" fill="#000"/><rect x="22" y="43" width="1" height="1" fill="#ffffff"/><rect x="23" y="43" width="1" height="1" fill="#000"/><rect x="22" y="44" width="1" height="1" fill="#000"/><rect x="23" y="44" width="1" height="1" fill="#ffffff"/><rect x="24" y="37" width="1" height="5" fill="#000"/><rect x="34" y="31" width="5" height="1" fill="#000"/><rect x="40" y="31" width="10" height="1" fill="#000"/><rect x="40" y="33" width="10" height="1" fill="#000"/><rect x="40" y="35" width="10" height="1" fill="#000"/><rect x="36" y="33" width="1" height="11" fill="#000080"/><rect x="35" y="34" width="3" height="1" fill="#000080"/><rect x="34" y="35" width="5" height="1" fill="#000080"/><rect x="59" y="31" width="5" height="1" fill="#000"/><rect x="65" y="31" width="10" height="1" fill="#000"/><rect x="66" y="33" width="7" height="1" fill="#000"/><rect x="67" y="35" width="1" height="1" fill="#000"/><rect x="69" y="35" width="5" height="1" fill="#000"/><rect x="67" y="37" width="1" height="1" fill="#000"/><rect x="69" y="37" width="5" height="1" fill="#000"/><rect x="67" y="41" width="1" height="1" fill="#000"/><rect x="69" y="41" width="5" height="1" fill="#000"/><rect x="67" y="43" width="1" height="1" fill="#000"/><rect x="69" y="43" width="5" height="1" fill="#000"/><rect x="66" y="39" width="2" height="1" fill="#000"/><rect x="69" y="39" width="4" height="1" fill="#000"/><rect x="61" y="33" width="1" height="10" fill="#000080"/><rect x="59" y="41" width="5" height="1" fill="#000080"/><rect x="60" y="42" width="3" height="1" fill="#000080"/><rect x="61" y="43" width="1" height="1" fill="#000080"/><path d="M84.5 34V42M87.5 31V44.5M84.5 34L87.5 31M84.5 42L87.5 45" stroke="#000" stroke-width="1" fill="none"/><polygon points="85,34 87,32 87,44 85,42" fill="#909090"/><rect x="85" y="35" width="2" height="1" fill="#fff"/><rect x="85" y="37" width="2" height="1" fill="#fff"/><rect x="85" y="39" width="2" height="1" fill="#fff"/><rect x="85" y="41" width="2" height="1" fill="#fff"/><rect x="89" y="37" width="4" height="1" fill="#000"/><rect x="89" y="38" width="4" height="1" fill="#000"/><rect x="93" y="35" width="1" height="6" fill="#000"/><rect x="94" y="36" width="1" height="4" fill="#000"/><rect x="95" y="37" width="1" height="2" fill="#000"/><polygon points="97,33 99,31 99,44 97,42" fill="#e4dc50"/><path d="M96.5 33V42M99.5 30V44.5M96.5 33L99.5 30M96.5 42L99.5 45" stroke="#000" stroke-width="1" fill="none"/><rect x="97" y="35" width="2" height="1" fill="#000"/><rect x="97" y="37" width="2" height="1" fill="#000"/><rect x="97" y="39" width="2" height="1" fill="#000"/><rect x="97" y="41" width="2" height="1" fill="#000"/></g><rect x="120" y="36" width="12" height="10" fill="#f8f8f8"/><rect x="125" y="37" width="1" height="1" fill="#ffff00"/><rect x="127" y="37" width="1" height="1" fill="#ffff00"/><rect x="129" y="37" width="1" height="1" fill="#ffff00"/><rect x="131" y="37" width="1" height="1" fill="#ffff00"/><rect x="123" y="39" width="1" height="1" fill="#ffff00"/><rect x="125" y="39" width="1" height="1" fill="#ffff00"/><rect x="127" y="39" width="1" height="1" fill="#ffff00"/><rect x="129" y="39" width="1" height="1" fill="#ffff00"/><rect x="131" y="39" width="1" height="1" fill="#ffff00"/><rect x="121" y="41" width="1" height="1" fill="#ffff00"/><rect x="123" y="41" width="1" height="1" fill="#ffff00"/><rect x="125" y="41" width="1" height="1" fill="#ffff00"/><rect x="127" y="41" width="1" height="1" fill="#ffff00"/><rect x="129" y="41" width="1" height="1" fill="#ffff00"/><rect x="131" y="41" width="1" height="1" fill="#ffff00"/><rect x="121" y="43" width="1" height="1" fill="#ffff00"/><rect x="123" y="43" width="1" height="1" fill="#ffff00"/><rect x="125" y="43" width="1" height="1" fill="#ffff00"/><rect x="127" y="43" width="1" height="1" fill="#ffff00"/><rect x="129" y="43" width="1" height="1" fill="#ffff00"/><rect x="131" y="43" width="1" height="1" fill="#ffff00"/><rect x="121" y="45" width="1" height="1" fill="#ffff00"/><rect x="123" y="45" width="1" height="1" fill="#ffff00"/><rect x="125" y="45" width="1" height="1" fill="#ffff00"/><rect x="127" y="45" width="1" height="1" fill="#ffff00"/><rect x="129" y="45" width="1" height="1" fill="#ffff00"/><rect x="131" y="45" width="1" height="1" fill="#ffff00"/><g filter="url(#halo)"><rect x="114" y="29" width="1" height="1" fill="#000"/><rect x="117" y="29" width="1" height="1" fill="#000"/><rect x="114" y="30" width="1" height="1" fill="#c4c4c4"/><rect x="115" y="30" width="1" height="1" fill="#ffffff"/><rect x="116" y="30" width="1" height="1" fill="#ffffff"/><rect x="117" y="30" width="1" height="1" fill="#ffffff"/><rect x="118" y="30" width="1" height="1" fill="#000"/><rect x="119" y="30" width="1" height="1" fill="#ff0000"/><rect x="114" y="31" width="1" height="1" fill="#c4c4c4"/><rect x="115" y="31" width="1" height="1" fill="#c4c4c4"/><rect x="116" y="31" width="1" height="1" fill="#ffffff"/><rect x="117" y="31" width="1" height="1" fill="#ffffff"/><rect x="118" y="31" width="1" height="1" fill="#ffffff"/><rect x="119" y="31" width="1" height="1" fill="#000"/><rect x="120" y="31" width="1" height="1" fill="#ff0000"/><rect x="114" y="32" width="1" height="1" fill="#000"/><rect x="115" y="32" width="1" height="1" fill="#c4c4c4"/><rect x="116" y="32" width="1" height="1" fill="#c4c4c4"/><rect x="117" y="32" width="1" height="1" fill="#ffffff"/><rect x="118" y="32" width="1" height="1" fill="#ffffff"/><rect x="119" y="32" width="1" height="1" fill="#ffffff"/><rect x="120" y="32" width="1" height="1" fill="#000"/><rect x="121" y="32" width="1" height="1" fill="#000"/><rect x="115" y="33" width="1" height="1" fill="#000"/><rect x="116" y="33" width="1" height="1" fill="#c4c4c4"/><rect x="117" y="33" width="1" height="1" fill="#c4c4c4"/><rect x="118" y="33" width="1" height="1" fill="#ffffff"/><rect x="119" y="33" width="1" height="1" fill="#ffffff"/><rect x="120" y="33" width="1" height="1" fill="#ffffff"/><rect x="121" y="33" width="1" height="1" fill="#000"/><rect x="122" y="33" width="1" height="1" fill="#000"/><rect x="116" y="34" width="1" height="1" fill="#000"/><rect x="117" y="34" width="1" height="1" fill="#c4c4c4"/><rect x="118" y="34" width="1" height="1" fill="#c4c4c4"/><rect x="119" y="34" width="1" height="1" fill="#ffffff"/><rect x="120" y="34" width="1" height="1" fill="#ffffff"/><rect x="121" y="34" width="1" height="1" fill="#ffffff"/><rect x="122" y="34" width="1" height="1" fill="#000"/><rect x="123" y="34" width="1" height="1" fill="#000"/><rect x="124" y="34" width="1" height="1" fill="#000"/><rect x="125" y="34" width="1" height="1" fill="#000"/><rect x="117" y="35" width="1" height="1" fill="#000"/><rect x="118" y="35" width="1" height="1" fill="#c4c4c4"/><rect x="119" y="35" width="1" height="1" fill="#c4c4c4"/><rect x="120" y="35" width="1" height="1" fill="#ffffff"/><rect x="121" y="35" width="1" height="1" fill="#ffffff"/><rect x="122" y="35" width="1" height="1" fill="#ff0000"/><rect x="123" y="35" width="1" height="1" fill="#ff0000"/><rect x="124" y="35" width="1" height="1" fill="#ff0000"/><rect x="125" y="35" width="1" height="1" fill="#ff0000"/><rect x="126" y="35" width="1" height="1" fill="#000"/><rect x="118" y="36" width="1" height="1" fill="#000"/><rect x="119" y="36" width="1" height="1" fill="#c4c4c4"/><rect x="120" y="36" width="1" height="1" fill="#900000"/><rect x="121" y="36" width="1" height="1" fill="#ff0000"/><rect x="122" y="36" width="1" height="1" fill="#ff0000"/><rect x="123" y="36" width="1" height="1" fill="#ff0000"/><rect x="124" y="36" width="1" height="1" fill="#ff0000"/><rect x="125" y="36" width="1" height="1" fill="#000"/><rect x="118" y="37" width="1" height="1" fill="#000"/><rect x="119" y="37" width="1" height="1" fill="#000"/><rect x="120" y="37" width="1" height="1" fill="#900000"/><rect x="121" y="37" width="1" height="1" fill="#900000"/><rect x="122" y="37" width="1" height="1" fill="#ff0000"/><rect x="123" y="37" width="1" height="1" fill="#ff0000"/><rect x="124" y="37" width="1" height="1" fill="#000"/><rect x="119" y="38" width="1" height="1" fill="#000"/><rect x="120" y="38" width="1" height="1" fill="#900000"/><rect x="121" y="38" width="1" height="1" fill="#900000"/><rect x="122" y="38" width="1" height="1" fill="#ff0000"/><rect x="123" y="38" width="1" height="1" fill="#000"/><rect x="119" y="39" width="1" height="1" fill="#000"/><rect x="120" y="39" width="1" height="1" fill="#900000"/><rect x="121" y="39" width="1" height="1" fill="#900000"/><rect x="122" y="39" width="1" height="1" fill="#000"/><rect x="119" y="40" width="1" height="1" fill="#000"/><rect x="120" y="40" width="1" height="1" fill="#900000"/><rect x="121" y="40" width="1" height="1" fill="#000"/><rect x="120" y="41" width="1" height="1" fill="#000"/><path d="M143.5 29.5L150.5 36.5M150.5 38.5L143.5 45.5" stroke="#000080" stroke-width="1.1" fill="none"/><rect x="150" y="36" width="7" height="1" fill="#000080"/><rect x="150" y="38" width="7" height="1" fill="#000080"/><rect x="139" y="33" width="7" height="2" fill="#008000"/><rect x="141" y="35" width="2" height="7" fill="#008000"/><rect x="144" y="34" width="2" height="8" fill="#008000"/><rect x="144" y="34" width="5" height="2" fill="#008000"/><rect x="144" y="37" width="5" height="2" fill="#008000"/><rect x="144" y="40" width="5" height="2" fill="#008000"/><rect x="171" y="32" width="10" height="1" fill="#000"/><polygon points="180,29 187.5,32.5 180,36" fill="#000"/><rect x="174" y="38" width="1" height="8" fill="#0000ff"/><rect x="173" y="39" width="1" height="1" fill="#0000ff"/><rect x="172" y="40" width="1" height="1" fill="#0000ff"/><rect x="181" y="38" width="4" height="1" fill="#0000ff"/><rect x="185" y="39" width="1" height="2" fill="#0000ff"/><rect x="184" y="41" width="1" height="1" fill="#0000ff"/><rect x="183" y="42" width="1" height="1" fill="#0000ff"/><rect x="182" y="43" width="1" height="1" fill="#0000ff"/><rect x="181" y="44" width="1" height="1" fill="#0000ff"/><rect x="180" y="45" width="6" height="1" fill="#0000ff"/><rect x="200" y="32" width="1" height="1" fill="#000"/><rect x="201" y="32" width="1" height="1" fill="#000"/><rect x="202" y="32" width="1" height="1" fill="#000"/><rect x="203" y="32" width="1" height="1" fill="#000"/><rect x="205" y="32" width="1" height="1" fill="#000"/><rect x="206" y="32" width="1" height="1" fill="#000"/><rect x="207" y="32" width="1" height="1" fill="#000"/><rect x="208" y="32" width="1" height="1" fill="#000"/><rect x="198" y="33" width="1" height="1" fill="#000"/><rect x="199" y="33" width="1" height="1" fill="#000"/><rect x="200" y="33" width="1" height="1" fill="#ff0000"/><rect x="201" y="33" width="1" height="1" fill="#ff0000"/><rect x="202" y="33" width="1" height="1" fill="#ff0000"/><rect x="203" y="33" width="1" height="1" fill="#400000"/><rect x="204" y="33" width="1" height="1" fill="#000"/><rect x="205" y="33" width="1" height="1" fill="#400000"/><rect x="206" y="33" width="1" height="1" fill="#ff0000"/><rect x="207" y="33" width="1" height="1" fill="#ff0000"/><rect x="208" y="33" width="1" height="1" fill="#ff0000"/><rect x="209" y="33" width="1" height="1" fill="#000"/><rect x="210" y="33" width="1" height="1" fill="#000"/><rect x="197" y="34" width="1" height="1" fill="#000"/><rect x="198" y="34" width="1" height="1" fill="#ff0000"/><rect x="199" y="34" width="1" height="1" fill="#ff0000"/><rect x="200" y="34" width="1" height="1" fill="#ff0000"/><rect x="201" y="34" width="1" height="1" fill="#ff0000"/><rect x="202" y="34" width="1" height="1" fill="#400000"/><rect x="203" y="34" width="1" height="1" fill="#ff0000"/><rect x="204" y="34" width="1" height="1" fill="#ff0000"/><rect x="205" y="34" width="1" height="1" fill="#ff0000"/><rect x="206" y="34" width="1" height="1" fill="#400000"/><rect x="207" y="34" width="1" height="1" fill="#ff0000"/><rect x="208" y="34" width="1" height="1" fill="#ff0000"/><rect x="209" y="34" width="1" height="1" fill="#ff0000"/><rect x="210" y="34" width="1" height="1" fill="#ff0000"/><rect x="211" y="34" width="1" height="1" fill="#000"/><rect x="197" y="35" width="1" height="1" fill="#000"/><rect x="198" y="35" width="1" height="1" fill="#ff0000"/><rect x="199" y="35" width="1" height="1" fill="#ff0000"/><rect x="200" y="35" width="1" height="1" fill="#ff0000"/><rect x="201" y="35" width="1" height="1" fill="#ff0000"/><rect x="202" y="35" width="1" height="1" fill="#900000"/><rect x="203" y="35" width="1" height="1" fill="#ff0000"/><rect x="204" y="35" width="1" height="1" fill="#ff0000"/><rect x="205" y="35" width="1" height="1" fill="#ff0000"/><rect x="206" y="35" width="1" height="1" fill="#900000"/><rect x="207" y="35" width="1" height="1" fill="#ff0000"/><rect x="208" y="35" width="1" height="1" fill="#ff0000"/><rect x="209" y="35" width="1" height="1" fill="#ff0000"/><rect x="210" y="35" width="1" height="1" fill="#ff0000"/><rect x="211" y="35" width="1" height="1" fill="#000"/><rect x="196" y="36" width="1" height="1" fill="#000"/><rect x="197" y="36" width="1" height="1" fill="#ff0000"/><rect x="198" y="36" width="1" height="1" fill="#ff0000"/><rect x="199" y="36" width="1" height="1" fill="#ff0000"/><rect x="200" y="36" width="1" height="1" fill="#ff0000"/><rect x="201" y="36" width="1" height="1" fill="#900000"/><rect x="202" y="36" width="1" height="1" fill="#ff0000"/><rect x="203" y="36" width="1" height="1" fill="#ff0000"/><rect x="204" y="36" width="1" height="1" fill="#ff0000"/><rect x="205" y="36" width="1" height="1" fill="#ff0000"/><rect x="206" y="36" width="1" height="1" fill="#ff0000"/><rect x="207" y="36" width="1" height="1" fill="#900000"/><rect x="208" y="36" width="1" height="1" fill="#ff0000"/><rect x="209" y="36" width="1" height="1" fill="#ff0000"/><rect x="210" y="36" width="1" height="1" fill="#ff0000"/><rect x="211" y="36" width="1" height="1" fill="#ff0000"/><rect x="212" y="36" width="1" height="1" fill="#000"/><rect x="196" y="37" width="1" height="1" fill="#000"/><rect x="197" y="37" width="1" height="1" fill="#ff0000"/><rect x="198" y="37" width="1" height="1" fill="#ff0000"/><rect x="199" y="37" width="1" height="1" fill="#ff0000"/><rect x="200" y="37" width="1" height="1" fill="#ff0000"/><rect x="201" y="37" width="1" height="1" fill="#400000"/><rect x="202" y="37" width="1" height="1" fill="#ff0000"/><rect x="203" y="37" width="1" height="1" fill="#ff0000"/><rect x="204" y="37" width="1" height="1" fill="#ff0000"/><rect x="205" y="37" width="1" height="1" fill="#ff0000"/><rect x="206" y="37" width="1" height="1" fill="#ff0000"/><rect x="207" y="37" width="1" height="1" fill="#400000"/><rect x="208" y="37" width="1" height="1" fill="#ff0000"/><rect x="209" y="37" width="1" height="1" fill="#ff0000"/><rect x="210" y="37" width="1" height="1" fill="#ff0000"/><rect x="211" y="37" width="1" height="1" fill="#ff0000"/><rect x="212" y="37" width="1" height="1" fill="#000"/><rect x="196" y="38" width="1" height="1" fill="#000"/><rect x="197" y="38" width="1" height="1" fill="#ff0000"/><rect x="198" y="38" width="1" height="1" fill="#ff0000"/><rect x="199" y="38" width="1" height="1" fill="#ff0000"/><rect x="200" y="38" width="1" height="1" fill="#ff0000"/><rect x="201" y="38" width="1" height="1" fill="#900000"/><rect x="202" y="38" width="1" height="1" fill="#ff0000"/><rect x="203" y="38" width="1" height="1" fill="#ff0000"/><rect x="204" y="38" width="1" height="1" fill="#ff0000"/><rect x="205" y="38" width="1" height="1" fill="#ff0000"/><rect x="206" y="38" width="1" height="1" fill="#ff0000"/><rect x="207" y="38" width="1" height="1" fill="#900000"/><rect x="208" y="38" width="1" height="1" fill="#ff0000"/><rect x="209" y="38" width="1" height="1" fill="#ff0000"/><rect x="210" y="38" width="1" height="1" fill="#ff0000"/><rect x="211" y="38" width="1" height="1" fill="#ff0000"/><rect x="212" y="38" width="1" height="1" fill="#000"/><rect x="196" y="39" width="1" height="1" fill="#000"/><rect x="197" y="39" width="1" height="1" fill="#ff0000"/><rect x="198" y="39" width="1" height="1" fill="#ff0000"/><rect x="199" y="39" width="1" height="1" fill="#ff0000"/><rect x="200" y="39" width="1" height="1" fill="#ff0000"/><rect x="201" y="39" width="1" height="1" fill="#400000"/><rect x="202" y="39" width="1" height="1" fill="#ff0000"/><rect x="203" y="39" width="1" height="1" fill="#ff0000"/><rect x="204" y="39" width="1" height="1" fill="#ff0000"/><rect x="205" y="39" width="1" height="1" fill="#ff0000"/><rect x="206" y="39" width="1" height="1" fill="#ff0000"/><rect x="207" y="39" width="1" height="1" fill="#400000"/><rect x="208" y="39" width="1" height="1" fill="#ff0000"/><rect x="209" y="39" width="1" height="1" fill="#ff0000"/><rect x="210" y="39" width="1" height="1" fill="#ff0000"/><rect x="211" y="39" width="1" height="1" fill="#ff0000"/><rect x="212" y="39" width="1" height="1" fill="#000"/><rect x="197" y="40" width="1" height="1" fill="#000"/><rect x="198" y="40" width="1" height="1" fill="#ff0000"/><rect x="199" y="40" width="1" height="1" fill="#ff0000"/><rect x="200" y="40" width="1" height="1" fill="#ff0000"/><rect x="201" y="40" width="1" height="1" fill="#ff0000"/><rect x="202" y="40" width="1" height="1" fill="#400000"/><rect x="203" y="40" width="1" height="1" fill="#ff0000"/><rect x="204" y="40" width="1" height="1" fill="#ff0000"/><rect x="205" y="40" width="1" height="1" fill="#ff0000"/><rect x="206" y="40" width="1" height="1" fill="#400000"/><rect x="207" y="40" width="1" height="1" fill="#ff0000"/><rect x="208" y="40" width="1" height="1" fill="#ff0000"/><rect x="209" y="40" width="1" height="1" fill="#ff0000"/><rect x="210" y="40" width="1" height="1" fill="#ff0000"/><rect x="211" y="40" width="1" height="1" fill="#000"/><rect x="197" y="41" width="1" height="1" fill="#000"/><rect x="198" y="41" width="1" height="1" fill="#ff0000"/><rect x="199" y="41" width="1" height="1" fill="#ff0000"/><rect x="200" y="41" width="1" height="1" fill="#ff0000"/><rect x="201" y="41" width="1" height="1" fill="#ff0000"/><rect x="202" y="41" width="1" height="1" fill="#900000"/><rect x="203" y="41" width="1" height="1" fill="#ff0000"/><rect x="204" y="41" width="1" height="1" fill="#ff0000"/><rect x="205" y="41" width="1" height="1" fill="#ff0000"/><rect x="206" y="41" width="1" height="1" fill="#900000"/><rect x="207" y="41" width="1" height="1" fill="#ff0000"/><rect x="208" y="41" width="1" height="1" fill="#ff0000"/><rect x="209" y="41" width="1" height="1" fill="#ff0000"/><rect x="210" y="41" width="1" height="1" fill="#ff0000"/><rect x="211" y="41" width="1" height="1" fill="#000"/><rect x="198" y="42" width="1" height="1" fill="#000"/><rect x="199" y="42" width="1" height="1" fill="#000"/><rect x="200" y="42" width="1" height="1" fill="#ff0000"/><rect x="201" y="42" width="1" height="1" fill="#ff0000"/><rect x="202" y="42" width="1" height="1" fill="#ff0000"/><rect x="203" y="42" width="1" height="1" fill="#900000"/><rect x="204" y="42" width="1" height="1" fill="#000"/><rect x="205" y="42" width="1" height="1" fill="#900000"/><rect x="206" y="42" width="1" height="1" fill="#ff0000"/><rect x="207" y="42" width="1" height="1" fill="#ff0000"/><rect x="208" y="42" width="1" height="1" fill="#ff0000"/><rect x="209" y="42" width="1" height="1" fill="#000"/><rect x="210" y="42" width="1" height="1" fill="#000"/><rect x="200" y="43" width="1" height="1" fill="#000"/><rect x="201" y="43" width="1" height="1" fill="#000"/><rect x="202" y="43" width="1" height="1" fill="#000"/><rect x="203" y="43" width="1" height="1" fill="#000"/><rect x="205" y="43" width="1" height="1" fill="#000"/><rect x="206" y="43" width="1" height="1" fill="#000"/><rect x="207" y="43" width="1" height="1" fill="#000"/><rect x="208" y="43" width="1" height="1" fill="#000"/></g><rect x="15.5" y="450.5" width="5" height="5" fill="url(#bx)" stroke="#5a6878"/><rect x="25.5" y="449.5" width="5" height="5" fill="url(#bx)" stroke="#5a6878"/><rect x="25.5" y="459.5" width="5" height="5" fill="url(#bx)" stroke="#5a6878"/><path d="M21 452.5H25M17.5 456V461.5H25" stroke="#8090a0" stroke-width="1" fill="none"/><rect x="22" y="450" width="1" height="15" fill="#0000ff"/><rect x="15" y="457" width="16" height="1" fill="#0000ff"/><rect x="147" y="449" width="16" height="16" fill="#34cc34"/><rect x="147" y="449" width="1" height="16" fill="#003800"/><rect x="148" y="449" width="1" height="16" fill="#108c10"/><rect x="149" y="456" width="14" height="1" fill="#80f080"/><rect x="149" y="459" width="14" height="1" fill="#80f080"/><rect x="149" y="462" width="14" height="1" fill="#80f080"/><path d="M152.5 450V455.5H163M151 450.5V464" stroke="#a0f8a0" stroke-width="1" fill="none"/><rect x="153" y="451" width="10" height="1" fill="#80f080"/><rect x="155" y="452" width="2" height="2" fill="#007000"/><rect x="156" y="454" width="2" height="2" fill="#007000"/><rect x="159" y="454" width="2" height="2" fill="#007000"/><path d="M275 461.5H277.5V455.5H280.5V461.5H283.5V455.5H286" stroke="#0000ff" stroke-width="1" fill="none"/></svg></body></html>
